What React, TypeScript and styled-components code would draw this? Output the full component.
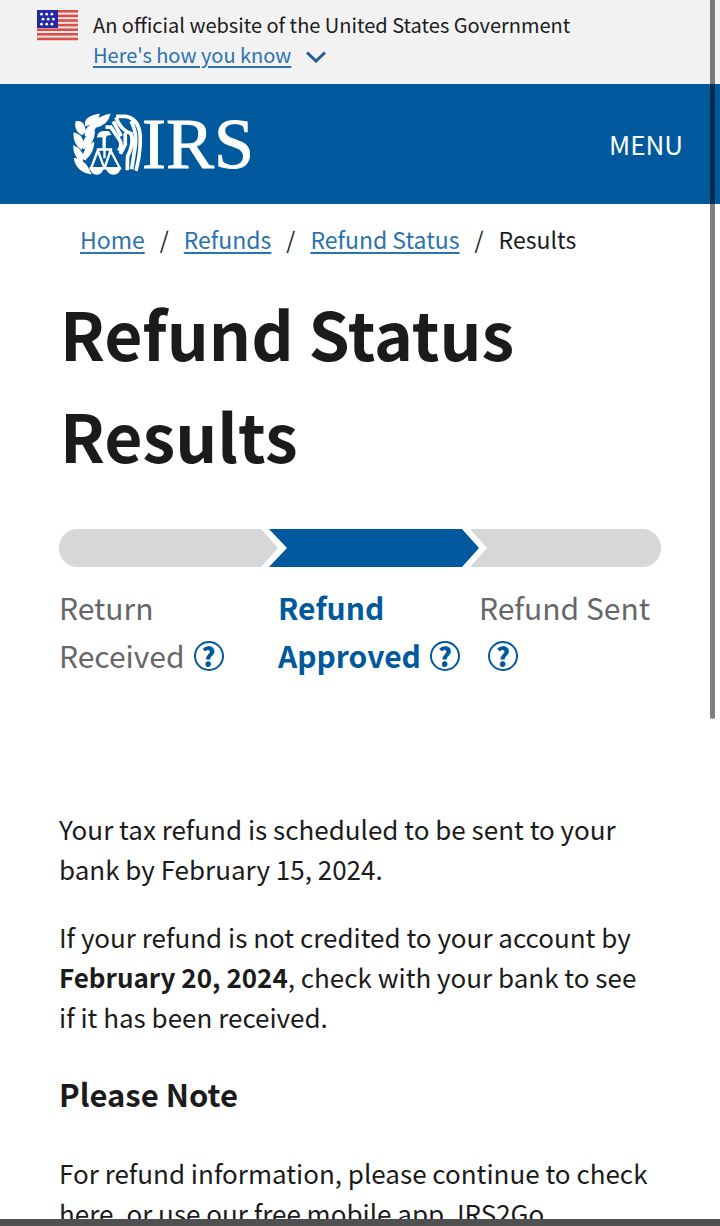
import React, { ReactNode } from 'react';
import styled, { createGlobalStyle } from 'styled-components';

const colors = {
  brand: '#00599c',
  link: '#2a72b0',
  ink: '#1b1b1b',
  muted: '#66676b',
  track: '#d6d7d9',
  banner: '#f2f2f2',
};

const GlobalStyle = createGlobalStyle`
  * {
    box-sizing: border-box;
  }
  body {
    margin: 0;
    background: #fff;
    color: ${colors.ink};
    font-family: 'Noto Sans CJK SC', 'Noto Sans', sans-serif;
  }
  button {
    font-family: inherit;
    border: 0;
    padding: 0;
    background: none;
    cursor: pointer;
  }
`;

const Screen = styled.div`
  position: relative;
  display: flex;
  flex-direction: column;
  height: 100vh;
`;

const Page = styled.div`
  flex: 1;
  min-height: 0;
  overflow: hidden;
`;

const BottomBar = styled.div`
  height: 7px;
  background: #505050;
`;

const ScrollThumb = styled.div`
  position: absolute;
  top: 0;
  right: 5px;
  width: 5px;
  height: 719px;
  border-radius: 0 0 3px 3px;
  background: rgba(0, 0, 0, 0.5);
`;

const Banner = styled.section`
  display: flex;
  gap: 15px;
  padding: 10px 37px 14px;
  background: ${colors.banner};
`;

const BannerText = styled.div`
  display: flex;
  flex-direction: column;
  align-items: flex-start;
  font-size: 20px;
  line-height: 30px;
`;

const BannerToggle = styled.button`
  display: flex;
  align-items: center;
  gap: 15px;
  color: ${colors.link};
  font-size: 20px;
  line-height: 30px;

  span {
    text-decoration: underline;
    text-underline-offset: 3px;
  }

  svg {
    margin-top: 4px;
  }
`;

const Header = styled.header`
  display: flex;
  align-items: center;
  justify-content: space-between;
  height: 120px;
  padding: 0 37px 0 73px;
  background: ${colors.brand};
  color: #fff;
`;

const LogoLink = styled.a`
  display: flex;
  align-items: center;
  color: #fff;
  text-decoration: none;
`;

const LogoText = styled.span`
  font-family: 'Liberation Serif', serif;
  font-size: 72px;
  line-height: 72px;
  -webkit-text-stroke: 1px #fff;
`;

const MenuButton = styled.button`
  color: #fff;
  font-size: 26px;
  line-height: 40px;
`;

const Breadcrumbs = styled.ol`
  display: flex;
  margin: 0;
  padding: 15px 80px 0;
  list-style: none;
  font-size: 23px;
  line-height: 40px;

  li + li::before {
    content: '/';
    padding: 0 15px;
  }

  a {
    color: ${colors.link};
    text-underline-offset: 3px;
  }
`;

const Main = styled.main`
  padding: 0 59px;
`;

const Title = styled.h1`
  margin: 22px 0 44px;
  padding-left: 1px;
  font-size: 66px;
  line-height: 102px;
`;

const Progress = styled.svg`
  display: block;
  width: 100%;
  height: 38px;
`;

const Steps = styled.ol`
  display: grid;
  grid-template-columns: 219px 201px 1fr;
  margin: 16px 0 0;
  padding: 0;
  list-style: none;
`;

const Step = styled.li<{ $active?: boolean }>`
  color: ${({ $active }) => ($active ? colors.brand : colors.muted)};
  font-size: 30px;
  font-weight: ${({ $active }) => ($active ? 700 : 400)};
  line-height: 48px;
`;

const StepLine = styled.span`
  display: flex;
  align-items: center;
  gap: 9px;
  min-height: 48px;
`;

const HelpIndent = styled(StepLine)`
  padding-left: 9px;
`;

const Help = styled.button`
  width: 30px;
  height: 30px;
  margin-top: 2px;
  border: 2px solid ${colors.brand};
  border-radius: 50%;
  color: ${colors.brand};
  font-size: 26px;
  font-weight: 900;
  line-height: 26px;
`;

const Copy = styled.section`
  padding: 130px 12px 0 0;
`;

const Paragraph = styled.p`
  margin: 0 0 28px;
  font-size: 26px;
  line-height: 40px;
`;

const NoteHeading = styled.h2`
  margin: 35px 0 37px;
  font-size: 31px;
  line-height: 44px;
`;

const Flag = () => (
  <svg width="41" height="31" viewBox="0 0 41 31" aria-hidden="true">
    <rect width="41" height="31" fill="#fbe9e6" />
    {[0, 1, 2, 3, 4, 5, 6].map((i) => (
      <rect key={i} y={i * 4.6} width="41" height="2.6" fill="#d8504c" />
    ))}
    <rect width="21" height="18" fill="#2428a4" />
    {[0, 1, 2].map((row) =>
      [0, 1, 2].map((col) => (
        <circle
          key={`${row}-${col}`}
          cx={4.5 + col * 5.2 + (row === 1 ? 1.5 : 0)}
          cy={4.2 + row * 5}
          r="1.4"
          fill="#fff"
        />
      ))
    )}
  </svg>
);

const Chevron = () => (
  <svg width="20" height="12" viewBox="0 0 20 12" aria-hidden="true">
    <path d="M1 1.5 10 10l9-8.5" fill="none" stroke="#1f5f96" strokeWidth="3" />
  </svg>
);

const Emblem = () => (
  <svg width="69" height="63" viewBox="40 38 206 188" fill="#fff" aria-hidden="true">
    {/* laurel branch */}
    <path
      d="M77 66q3-18 41-24q-2 22-40 34zM94 80q8-26 56-38q-6 30-44 39zM49 64q22-4 27 22q-2 14-10 16q-22-12-17-38zM76 104q0-28 33-37q0 28-27 41zM43 98q24 4 27 30l-5 18q-24-18-22-48zM68 140q2-34 36-46q-1 34-30 51zM42 136q24 10 29 35l-4 14q-25-17-25-49zM70 172q0-28 32-46q0 28-26 52zM44 174q24 2 38 24l11 21q-41-6-49-45z"
      stroke="#fff"
      strokeWidth="3"
    />
    {/* eagle head */}
    <path d="M111 111q4-19 20-19h16l8 12-14 2-3 7v34h-10v-37z" />
    {/* body and wing feathers */}
    <path
      d="M137 80h16l27 40q8 15-4 31M160 63l24 44M169 48h29q42 8 43 66q0 50-13 96M168 51q15 39 45 48q10 28-10 68l-1 42M213 62q20 35 12 80l-10 64M196 97v36l-15 27"
      fill="none"
      stroke="#fff"
      strokeWidth="11"
    />
    {/* scales of justice */}
    <path
      d="M111 147h46M134 143v30M114 150l-20 53h40l-20-53M152 150l-18 53h46l-28-53"
      fill="none"
      stroke="#fff"
      strokeWidth="7"
    />
    <path d="M88 200h45q-5 22-22 22t-23-22zM136 200h48q-5 22-23 22t-25-22z" />
  </svg>
);

type HelpButtonProps = {
  label: string;
};

const HelpButton = ({ label }: HelpButtonProps) => (
  <Help type="button" aria-label={label}>
    ?
  </Help>
);

type StepItemProps = {
  active?: boolean;
  title: string;
  children: ReactNode;
};

const StepItem = ({ active, title, children }: StepItemProps) => (
  <Step $active={active} aria-current={active ? 'step' : undefined}>
    <StepLine>{title}</StepLine>
    {children}
  </Step>
);

const App = () => (
  <>
    <GlobalStyle />
    <Screen>
      <Page>
        <Banner>
          <Flag />
          <BannerText>
            An official website of the United States Government
            <BannerToggle type="button">
              <span>Here's how you know</span>
              <Chevron />
            </BannerToggle>
          </BannerText>
        </Banner>
        <Header>
          <LogoLink href="#home">
            <Emblem />
            <LogoText>IRS</LogoText>
          </LogoLink>
          <MenuButton type="button">MENU</MenuButton>
        </Header>
        <nav aria-label="Breadcrumb">
          <Breadcrumbs>
            <li>
              <a href="#home">Home</a>
            </li>
            <li>
              <a href="#refunds">Refunds</a>
            </li>
            <li>
              <a href="#status">Refund Status</a>
            </li>
            <li aria-current="page">Results</li>
          </Breadcrumbs>
        </nav>
        <Main>
          <Title>
            Refund Status
            <br />
            Results
          </Title>
          <Progress viewBox="0 0 602 38" preserveAspectRatio="none" aria-hidden="true">
            <path d="M18 0h184l17 19-17 19H18a18 19 0 0 1 0-38z" fill={colors.track} />
            <path d="M210 0h193l17 19-17 19H210l18-19z" fill={colors.brand} />
            <path d="M411 0h173a18 19 0 0 1 0 38H411l17-19z" fill={colors.track} />
          </Progress>
          <Steps>
            <StepItem title="Return">
              <StepLine>
                Received <HelpButton label="About return received" />
              </StepLine>
            </StepItem>
            <StepItem title="Refund" active>
              <StepLine>
                Approved <HelpButton label="About refund approved" />
              </StepLine>
            </StepItem>
            <StepItem title="Refund Sent">
              <HelpIndent>
                <HelpButton label="About refund sent" />
              </HelpIndent>
            </StepItem>
          </Steps>
          <Copy>
            <Paragraph>
              Your tax refund is scheduled to be sent to your bank by February 15, 2024.
            </Paragraph>
            <Paragraph>
              If your refund is not credited to your account by <b>February 20, 2024</b>, check
              with your bank to see if it has been received.
            </Paragraph>
            <NoteHeading>Please Note</NoteHeading>
            <Paragraph>
              For refund information, please continue to check here, or use our free mobile app,
              IRS2Go.
            </Paragraph>
          </Copy>
        </Main>
      </Page>
      <BottomBar />
      <ScrollThumb />
    </Screen>
  </>
);

export default App;
